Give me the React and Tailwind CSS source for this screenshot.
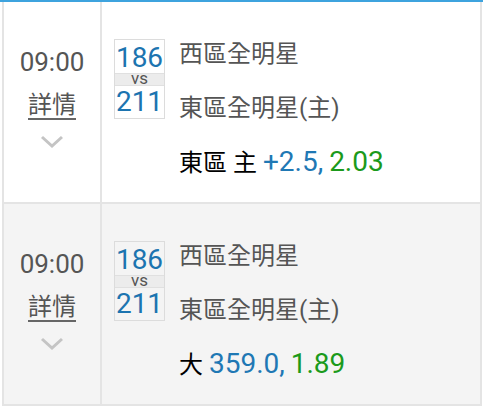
import React from "react";

const font = { fontFamily: "Roboto, 'Noto Sans CJK TC', sans-serif" };

function Chevron() {
  return (
    <svg width="24" height="14" viewBox="0 0 24 14" className="block">
      <polyline points="2,2 12,11 22,2" fill="none" stroke="#c4c4c4" strokeWidth="3" />
    </svg>
  );
}

function Row({ bg, bet }) {
  return (
    <div className={`flex h-[202px] border-b-2 border-[#e4e4e4] ${bg}`}>
      <div className="w-[98px] flex flex-col items-center border-r-2 border-[#e4e4e4] pt-[45px]">
        <div className="text-[26px] leading-[30px] text-[#555]">09:00</div>
        <div className="mt-[13px] text-[24px] leading-[30px] text-[#555] underline underline-offset-[5px] decoration-[#666]">詳情</div>
        <div className="mt-[15px]"><Chevron /></div>
      </div>
      <div className="flex-1 flex pl-[12px] pt-[37px]">
        <div className="w-[51px] h-[80px] border border-[#dcdcdc] flex flex-col overflow-hidden">
          <div className="h-[33px] text-[28px] leading-[36px] text-[#1c74b0] text-center">186</div>
          <div className="h-[13px] bg-[#ececec] border-y border-[#e0e0e0] text-[17px] leading-[9px] text-[#555] text-center">vs</div>
          <div className="flex-1 text-[28px] leading-[32px] text-[#1c74b0] text-center">211</div>
        </div>
        <div className="ml-[14px] flex flex-col">
          <div className="h-[54px] text-[24px] leading-[30px] text-[#555]">西區全明星</div>
          <div className="h-[54px] text-[24px] leading-[30px] text-[#555]">東區全明星(主)</div>
          <div className="text-[24px] leading-[30px] whitespace-nowrap">{bet}</div>
        </div>
      </div>
    </div>
  );
}

export default function App() {
  return (
    <div className="w-[483px] h-[411px] bg-white" style={font}>
      <div className="h-[2px] bg-[#3ea3de]" />
      <div className="ml-[2px] w-[480px] border-x-2 border-[#e4e4e4]">
        <Row
          bg="bg-white"
          bet={
            <>
              <span className="text-black">東區 主 </span>
              <span className="text-[#1f78b4] text-[28px]">+2.5,</span>{" "}
              <span className="text-[#1b9a1b] text-[28px]">2.03</span>
            </>
          }
        />
        <Row
          bg="bg-[#f4f4f4]"
          bet={
            <>
              <span className="text-black">大</span>{" "}
              <span className="text-[#1f78b4] text-[28px]">359.0,</span>{" "}
              <span className="text-[#1b9a1b] text-[28px]">1.89</span>
            </>
          }
        />
      </div>
    </div>
  );
}
